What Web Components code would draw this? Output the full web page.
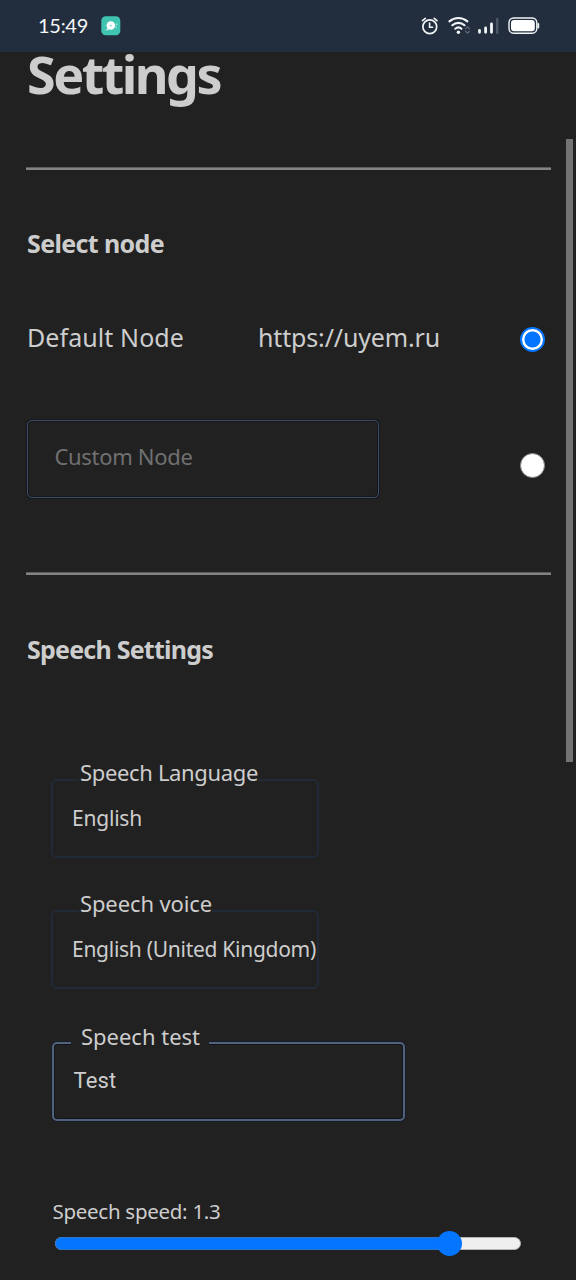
<!DOCTYPE html>
<html lang="en">
<head>
<meta charset="utf-8">
<title>Settings</title>
<style>
html,body{margin:0;height:100%;background:#212121;overflow:hidden}
body{font-family:"Noto Sans","Open Sans",sans-serif;color:#cdcdcd}
</style>
</head>
<body>
<settings-app></settings-app>
<script>
const define = (name, html, setup) => customElements.define(name, class extends HTMLElement {
  connectedCallback() {
    if (this.shadowRoot) return;
    const t = document.createElement('template');
    t.innerHTML = html;
    this.attachShadow({mode: 'open'}).append(document.importNode(t.content, true));
    if (setup) setup(this, this.shadowRoot);
  }
});

// One line of text, tracked so that it fills the width given in "w".
define('fit-text', `<style>:host{display:block;white-space:pre;width:max-content}span{display:inline-block}</style><span><slot></slot></span>`, (el, root) => {
  const span = root.querySelector('span');
  const natural = span.getBoundingClientRect().width;
  span.style.letterSpacing = (Number(el.getAttribute('w')) - natural) / el.textContent.length + 'px';
});

define('rule-line', `<style>:host{display:block;height:3px;margin:0 0 0 26px;width:525px;background:linear-gradient(#5c5c5c 0 1px,#838383 1px 3px)}</style>`);

define('radio-dot', `<style>
:host{display:block;box-sizing:border-box;width:25px;height:25px;border-radius:50%;background:#fff;border:1px solid #858585}
:host([checked]){background:radial-gradient(circle,#0475ff 0 7.6px,#fff 8.4px);border:2px solid #0475ff}
</style>`);

define('text-box', `<style>
:host{display:block;box-sizing:border-box;position:relative;border-radius:6px}
:host([kind=input]){border:1px solid #3f4d62;box-shadow:0 0 0 1px #131820,inset 0 0 0 1px #14171d;border-radius:5px}
:host([kind=focus]){border:2px solid #53617a;box-shadow:0 0 0 1px #121c2a,inset 0 0 0 1px #10151e;border-radius:5px}
:host([kind=select]){border:2px solid #212b38}
.label{position:absolute;left:17px;top:-24px;padding:0 9px 0 10px;height:32px;line-height:32px;background:#212121;font-size:22px}
:host([kind=select]) .label{left:26px;top:-25px;padding:0 0 0 1px}
</style><div class="label" hidden><slot name="label"></slot></div><slot></slot>`, (el, root) => {
  root.querySelector('.label').hidden = !el.querySelector('[slot=label]');
});

define('range-bar', `<style>
:host{display:block;position:relative;height:13px;width:466px;box-sizing:border-box;border-radius:7px;border:1px solid #b5b5b5;background:#efefef}
.fill{position:absolute;left:-1px;top:-1px;width:395px;height:13px;border-radius:7px 0 0 7px;box-sizing:border-box;background:#0475ff;border:1px solid #2a76ce;border-right:0}
.thumb{position:absolute;left:381px;top:-7px;width:25px;height:25px;border-radius:50%;background:#0475ff}
</style><div class="fill"></div><div class="thumb"></div>`);

define('status-bar', `<style>
:host{display:flex;box-sizing:border-box;height:52px;padding:0 36px 0 38px;align-items:center;background:#222e3d;color:#f4f6f8;flex:none}
fit-text{font:400 20px/28px Lato,sans-serif;margin-top:-2px}
svg{display:block}.app{margin-left:13px}.right{margin-left:auto}
</style>
<fit-text w="50">15:49</fit-text>
<svg class="app" width="20" height="20" viewBox="0 0 20 20"><rect x=".3" y=".3" width="19" height="19" rx="4.5" fill="#3fc4b1"/><circle cx="9.8" cy="9.5" r="4.3" fill="#fff"/><path d="M14.5 8.2h2M14.3 11h1.5M4.6 13.8h1.3M6.8 12l-.4 2 2-1" stroke="#c5efe8" stroke-width="1" fill="none"/><circle cx="9.9" cy="9.6" r=".9" fill="#6bd3c4"/></svg>
<svg class="right" width="120" height="24" viewBox="420 14 120 24" fill="none" stroke="#f2f5f8" stroke-linecap="round">
<circle cx="429.8" cy="26.8" r="6.9" stroke-width="1.7"/><path d="M429.6 23v4.3h3M422.5 20.7l2.8-2.4M437 20.7l-2.8-2.4" stroke-width="1.6"/>
<path d="M449.4 21.4c5.3-4.6 12.7-4.6 18 0M452.3 25.2c3.6-3.1 8.6-3.1 12.2 0M455.3 28.7c1.9-1.6 4.3-1.6 6.2 0" stroke-width="2.1"/><circle cx="458.4" cy="32.2" r="1.7" fill="#f2f5f8" stroke="none"/>
<path d="M465.5 28.8l2-2 2 2M465.5 31.2l2 2 2-2" stroke="#596475" stroke-width="1.3"/>
<path d="M479.5 30.5v1.8M485.6 28v4.3M491.5 24v8.3" stroke-width="2.8"/><path d="M497.2 19v13.8" stroke="#4b5768" stroke-width="2.4"/>
<rect x="509" y="18" width="27.8" height="15.2" rx="4.6" stroke-width="1.4"/><rect x="511" y="20" width="23.8" height="11.2" rx="3" fill="#fff" stroke="none"/><path d="M538.3 23.8v3.8" stroke-width="1.8"/>
</svg>`);

define('settings-app', `<style>
:host{display:flex;flex-direction:column;position:relative;width:576px;height:1280px;overflow:hidden;background:#212121;color:#cdcdcd}
main{display:flex;flex-direction:column;align-items:flex-start}
.h1{font-size:52px;line-height:44px;font-weight:700;margin:0 0 71px 27px}
.h2{font-size:25px;line-height:36px;font-weight:700;margin-left:27px}
.row{display:grid;grid-template-columns:231px 262px 25px;padding-left:27px;align-items:start}
.node{height:40px;margin-top:59px;font-size:25px;line-height:34px}
.node radio-dot{margin-top:7px}
.custom{height:78px;margin-top:60px;padding-left:26px;grid-template-columns:494px 25px}
.custom text-box{width:352px;height:78px;margin-left:1px;padding:19px 0 0 26.5px;font-size:22px;line-height:32px;color:#707070}
.custom radio-dot{margin-top:33px}
.fields{display:flex;flex-direction:column;gap:52px;margin:112px 0 0 51px;font-size:21px;line-height:32px}
.sel{width:268px;height:79px;padding:20.5px 0 0 19px}
.test{width:353px;height:79px;margin:1px 0 0 1px;padding:20px 0 0 19.5px}
.test>fit-text:not([slot]){font-family:Roboto,sans-serif;font-size:22px;line-height:34px}
.speed{font-size:20.5px;line-height:30px;margin:75px 0 11px 52.5px}
range-bar{margin-left:55px}
.scroll{position:absolute;left:566px;top:139px;width:7px;height:623px;background:#737373}
</style>
<status-bar></status-bar>
<main>
<fit-text class="h1" w="193">Settings</fit-text>
<rule-line></rule-line>
<fit-text class="h2" style="margin-top:55px" w="137">Select node</fit-text>
<div class="row node"><fit-text w="157">Default Node</fit-text><fit-text w="182">https://uyem.ru</fit-text><radio-dot checked></radio-dot></div>
<div class="row custom"><text-box kind="input"><fit-text w="138">Custom Node</fit-text></text-box><radio-dot></radio-dot></div>
<rule-line style="margin-top:74px"></rule-line>
<fit-text class="h2" style="margin-top:56px" w="186">Speech Settings</fit-text>
<div class="fields">
<text-box class="sel" kind="select"><fit-text slot="label" w="178">Speech Language</fit-text><fit-text w="70">English</fit-text></text-box>
<text-box class="sel" kind="select"><fit-text slot="label" w="132">Speech voice</fit-text><fit-text w="244">English (United Kingdom)</fit-text></text-box>
<text-box class="test" kind="focus"><fit-text slot="label" w="119">Speech test</fit-text><fit-text w="43">Test</fit-text></text-box>
</div>
<fit-text class="speed" w="168">Speech speed: 1.3</fit-text>
<range-bar></range-bar>
</main>
<div class="scroll"></div>`);
</script>
</body>
</html>
